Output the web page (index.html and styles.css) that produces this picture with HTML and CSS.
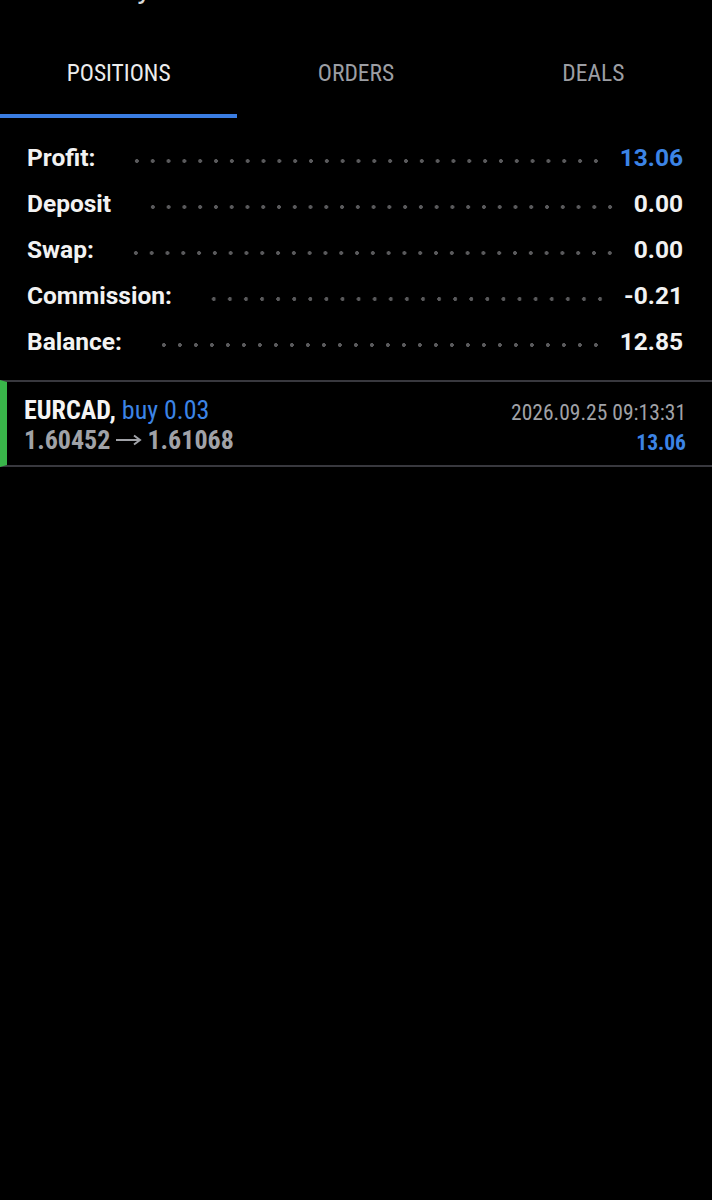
FILE: index.html
```html
<!DOCTYPE html>
<html>
<head>
<meta charset="utf-8">
<link rel="stylesheet" href="styles.css">
</head>
<body>
<div class="title-clip"><div class="title">History</div></div>
<nav class="tabs">
  <div class="tab active"><span class="tab-label">POSITIONS</span></div>
  <div class="tab"><span class="tab-label">ORDERS</span></div>
  <div class="tab"><span class="tab-label">DEALS</span></div>
</nav>
<section class="summary">
  <div class="row"><span class="label">Profit:</span><span class="leader"></span><span class="value blue">13.06</span></div>
  <div class="row"><span class="label">Deposit</span><span class="leader"></span><span class="value">0.00</span></div>
  <div class="row"><span class="label">Swap:</span><span class="leader"></span><span class="value">0.00</span></div>
  <div class="row"><span class="label">Commission:</span><span class="leader"></span><span class="value">-0.21</span></div>
  <div class="row"><span class="label">Balance:</span><span class="leader"></span><span class="value">12.85</span></div>
</section>
<section class="position">
  <div class="pos-left">
    <div class="pos-line1"><span class="symbol">EURCAD,</span> <span class="side">buy 0.03</span></div>
    <div class="pos-line2">1.60452<svg class="arrow" width="33" height="14" viewBox="0 0 33 14"><path d="M4 7H28M22 2.5L28 7L22 11.5" fill="none" stroke="#a0a2a7" stroke-width="2"/></svg>1.61068</div>
  </div>
  <div class="pos-right">
    <div class="pos-date">2026.09.25 09:13:31</div>
    <div class="pos-profit">13.06</div>
  </div>
</section>
</body>
</html>
```
FILE: styles.css
```css
html, body {
  margin: 0;
  padding: 0;
  background: #000;
  color: #f2f2f2;
  font-family: Roboto, "Noto Sans", sans-serif;
}

.title-clip {
  height: 6px;
  overflow: hidden;
}
.title {
  margin-top: -30px;
  margin-left: 56px;
  font-size: 30px;
  line-height: 36px;
  color: #d8d8d8;
}

.tabs {
  display: grid;
  grid-template-columns: 1fr 1fr 1fr;
}
.tab {
  padding-top: 49px;
  padding-bottom: 23px;
  line-height: 36px;
  text-align: center;
  border-bottom: 4px solid transparent;
  font-family: "Roboto Condensed", Roboto, sans-serif;
  font-size: 23.5px;
  color: #9c9ea3;
}
.tab.active {
  color: #ececec;
  border-bottom-color: #3a7de2;
}

.summary {
  padding: 16px 29px 16px 27px;
}
.row {
  display: flex;
  align-items: center;
  height: 46px;
  font-size: 24.5px;
  font-weight: 700;
}
.leader {
  flex: 1;
  height: 6px;
  margin: 8px 16px 0 34px;
  background-image: radial-gradient(circle, #5a5a5c 1.7px, transparent 2.2px);
  background-size: 15.7px 6px;
  background-repeat: space no-repeat;
}
.value {
  color: #f2f2f2;
}
.blue {
  color: #3c84e6;
}

.position {
  display: flex;
  justify-content: space-between;
  border-left: 7px solid #39b54a;
  border-top: 2px solid #38383e;
  border-bottom: 2px solid #38383e;
  height: 83px;
  padding: 0 26px 0 17px;
  font-family: "Roboto Condensed", Roboto, sans-serif;
}
.pos-left {
  padding-top: 13px;
  line-height: 30px;
  font-size: 26px;
}
.symbol {
  font-weight: 700;
  color: #f4f4f4;
}
.side {
  color: #3c84e6;
}
.pos-line2 {
  display: flex;
  align-items: center;
  color: #a0a2a7;
  font-weight: 700;
}
.arrow {
  margin: 0 2px 0 2px;
}
.pos-right {
  padding-top: 16px;
  line-height: 30px;
  text-align: right;
}
.pos-date {
  font-size: 21.5px;
  color: #a0a2a7;
}
.pos-profit {
  font-size: 21.5px;
  font-weight: 700;
  color: #3c84e6;
}
```
